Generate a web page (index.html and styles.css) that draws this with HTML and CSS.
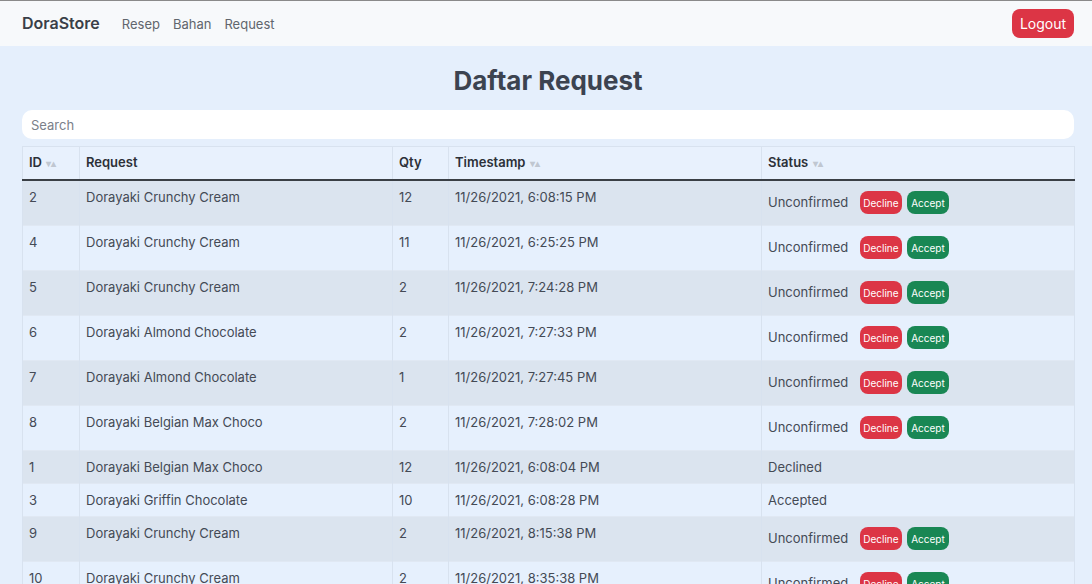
FILE: index.html
```html
<!DOCTYPE html>
<html>
<head>
<meta charset="utf-8">
<link rel="stylesheet" href="styles.css">
</head>
<body>
<nav class="navbar">
  <div class="nav-left">
    <span class="brand">DoraStore</span>
    <a class="nav-link">Resep</a>
    <a class="nav-link">Bahan</a>
    <a class="nav-link">Request</a>
  </div>
  <button class="btn-logout">Logout</button>
</nav>
<main class="main">
  <h1 class="title">Daftar Request</h1>
  <input class="search" type="text" placeholder="Search">
  <table class="table">
    <colgroup>
      <col class="c-id"><col class="c-req"><col class="c-qty"><col class="c-ts"><col class="c-st">
    </colgroup>
    <thead>
      <tr>
        <th>ID <span class="sort">▾▴</span></th>
        <th>Request</th>
        <th>Qty</th>
        <th>Timestamp <span class="sort">▾▴</span></th>
        <th>Status <span class="sort">▾▴</span></th>
      </tr>
    </thead>
    <tbody>
      <tr class="odd"><td>2</td><td>Dorayaki Crunchy Cream</td><td>12</td><td>11/26/2021, 6:08:15 PM</td><td class="status">Unconfirmed <span class="btns"><button class="btn decline">Decline</button><button class="btn accept">Accept</button></span></td></tr>
      <tr><td>4</td><td>Dorayaki Crunchy Cream</td><td>11</td><td>11/26/2021, 6:25:25 PM</td><td class="status">Unconfirmed <span class="btns"><button class="btn decline">Decline</button><button class="btn accept">Accept</button></span></td></tr>
      <tr class="odd"><td>5</td><td>Dorayaki Crunchy Cream</td><td>2</td><td>11/26/2021, 7:24:28 PM</td><td class="status">Unconfirmed <span class="btns"><button class="btn decline">Decline</button><button class="btn accept">Accept</button></span></td></tr>
      <tr><td>6</td><td>Dorayaki Almond Chocolate</td><td>2</td><td>11/26/2021, 7:27:33 PM</td><td class="status">Unconfirmed <span class="btns"><button class="btn decline">Decline</button><button class="btn accept">Accept</button></span></td></tr>
      <tr class="odd"><td>7</td><td>Dorayaki Almond Chocolate</td><td>1</td><td>11/26/2021, 7:27:45 PM</td><td class="status">Unconfirmed <span class="btns"><button class="btn decline">Decline</button><button class="btn accept">Accept</button></span></td></tr>
      <tr><td>8</td><td>Dorayaki Belgian Max Choco</td><td>2</td><td>11/26/2021, 7:28:02 PM</td><td class="status">Unconfirmed <span class="btns"><button class="btn decline">Decline</button><button class="btn accept">Accept</button></span></td></tr>
      <tr class="odd"><td>1</td><td>Dorayaki Belgian Max Choco</td><td>12</td><td>11/26/2021, 6:08:04 PM</td><td>Declined</td></tr>
      <tr><td>3</td><td>Dorayaki Griffin Chocolate</td><td>10</td><td>11/26/2021, 6:08:28 PM</td><td>Accepted</td></tr>
      <tr class="odd"><td>9</td><td>Dorayaki Crunchy Cream</td><td>2</td><td>11/26/2021, 8:15:38 PM</td><td class="status">Unconfirmed <span class="btns"><button class="btn decline">Decline</button><button class="btn accept">Accept</button></span></td></tr>
      <tr><td>10</td><td>Dorayaki Crunchy Cream</td><td>2</td><td>11/26/2021, 8:35:38 PM</td><td class="status">Unconfirmed <span class="btns"><button class="btn decline">Decline</button><button class="btn accept">Accept</button></span></td></tr>
    </tbody>
  </table>
</main>
</body>
</html>
```

FILE: styles.css
```css
* { box-sizing: border-box; }
html, body { margin: 0; padding: 0; }
body {
  font-family: Inter, "Noto Sans", sans-serif;
  background: #e5effc;
  color: #3b4250;
  font-size: 13px;
  overflow: hidden;
}
.navbar {
  height: 46px;
  background: #f7f9fb;
  border-top: 1px solid #8a8a8a;
  display: flex;
  align-items: center;
  justify-content: space-between;
  padding: 0 18px 0 22px;
}
.nav-left { display: flex; align-items: baseline; margin-top: -2px; }
.brand {
  font-size: 16px;
  font-weight: 600;
  color: #3a3f48;
  margin-right: 22px;
}
.nav-link {
  font-size: 13px;
  color: #61666d;
  margin-right: 13px;
}
.btn-logout {
  font-family: inherit;
  background: #dc3545;
  color: #fff;
  border: none;
  border-radius: 8px;
  font-size: 14px;
  height: 29px;
  width: 62px;
  padding: 0;
  margin-top: -1px;
}
.main { padding: 0 18px 0 22px; }
.title {
  margin: 17px 0 11px;
  text-align: center;
  font-size: 26px;
  font-weight: 700;
  line-height: 36px;
  color: #3c4350;
}
.search {
  display: block;
  width: 100%;
  height: 29px;
  border: none;
  border-radius: 10px;
  background: #fff;
  font-family: inherit;
  font-size: 13px;
  padding: 0 9px;
  margin-bottom: 7px;
  outline: none;
}
.search::placeholder { color: #7b8089; }
.table {
  width: 1052px;
  table-layout: fixed;
  border-collapse: collapse;
  color: #444a55;
}
.c-id { width: 57px; }
.c-req { width: 313px; }
.c-qty { width: 56px; }
.c-ts { width: 313px; }
.c-st { width: 313px; }
th, td {
  text-align: left;
  vertical-align: top;
  padding: 6px 6px;
  line-height: 20px;
  border-left: 1px solid #d8e2ef;
  border-right: 1px solid #d8e2ef;
}
thead th {
  background: #e8f1fd;
  border-top: 1px solid #d8e2ef;
  border-bottom: 2px solid #3a3f45;
  font-weight: 600;
  color: #2c3038;
  padding: 5px 6px 6px;
}
.sort {
  font-size: 10px;
  color: #c0c7d1;
  vertical-align: middle;
  margin-left: 1px;
}
tbody tr { border-bottom: 1px solid #e0e8f3; background: #e6f0fd; }
tbody tr.odd { background: #dbe4ef; }
.btns { display: inline-flex; gap: 5px; margin-left: 8px; vertical-align: middle; margin-top: 4px; margin-bottom: 5px; }
.btn {
  font-family: inherit;
  border: none;
  border-radius: 8px;
  color: #fff;
  font-size: 10px;
  height: 23px;
  width: 42px;
  padding: 0;
}
.decline { background: #dc3545; }
.accept { background: #198754; }
```
